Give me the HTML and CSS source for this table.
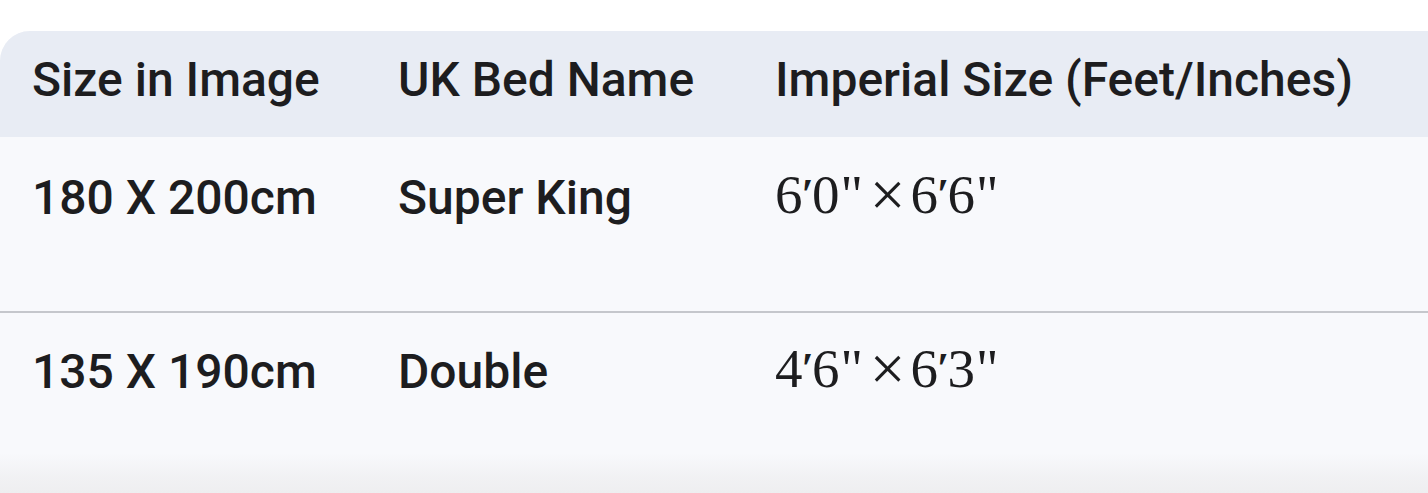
FILE: index.html
```html
<!DOCTYPE html>
<html lang="en">
<head>
<meta charset="utf-8">
<title>UK Bed Sizes</title>
<link rel="stylesheet" href="styles.css">
</head>
<body>
<div class="card">
  <div class="table">
    <div class="row head">
      <div class="cell">Size in Image</div>
      <div class="cell">UK Bed Name</div>
      <div class="cell">Imperial Size (Feet/Inches)</div>
    </div>
    <div class="row body first">
      <div class="cell">180 X 200cm</div>
      <div class="cell">Super King</div>
      <div class="cell math">6<span class="pr">′</span>0<span class="in">"</span><span class="times">×</span>6<span class="pr">′</span>6<span class="in">"</span></div>
    </div>
    <div class="row body">
      <div class="cell">135 X 190cm</div>
      <div class="cell">Double</div>
      <div class="cell math">4<span class="pr">′</span>6<span class="in">"</span><span class="times">×</span>6<span class="pr">′</span>3<span class="in">"</span></div>
    </div>
  </div>
  <div class="fade"></div>
</div>
</body>
</html>
```

FILE: styles.css
```css
html, body {
  margin: 0;
  padding: 0;
  background: #ffffff;
  overflow: hidden;
  height: 493px;
}

.card {
  position: relative;
  margin-top: 31px;
  width: 1480px;
  height: 462px;
  background: #f8f9fc;
  border-top-left-radius: 30px;
  overflow: hidden;
}

.table {
  display: flex;
  flex-direction: column;
}

.row {
  display: grid;
  grid-template-columns: 398px 377px 1fr;
  font-family: "Roboto", "Noto Sans", sans-serif;
  font-weight: 500;
  font-size: 48px;
  line-height: 58px;
  color: #1d1d1f;
}

.row .cell:first-child {
  padding-left: 32px;
}

.head {
  background: #e8ecf4;
  height: 106px;
  box-sizing: border-box;
  padding-top: 20px;
}

.body.first {
  height: 176px;
  box-sizing: border-box;
  padding-top: 32px;
  border-bottom: 2px solid #c5c7cc;
}

.body {
  padding-top: 30px;
}

.math {
  font-family: "Liberation Serif", "DejaVu Serif", serif;
  font-weight: 400;
  font-size: 55px;
  color: #1d1d1f;
  margin-top: -5px;
}

.pr {
  font-size: 0.8em;
  font-weight: 700;
  display: inline-block;
  transform: translateY(-4px);
  margin: 0 -2px 0 -1px;
}

.in {
  margin-left: 1px;
}

.times {
  display: inline-block;
  font-size: 1.15em;
  line-height: 1;
  vertical-align: -3px;
  margin: 0 5px 0 7px;
}

.fade {
  position: absolute;
  left: 0;
  right: 0;
  bottom: 0;
  height: 40px;
  background: linear-gradient(to bottom, rgba(238,238,240,0) 0%, rgba(238,238,240,0.7) 60%, #eeeef0 100%);
}
```
